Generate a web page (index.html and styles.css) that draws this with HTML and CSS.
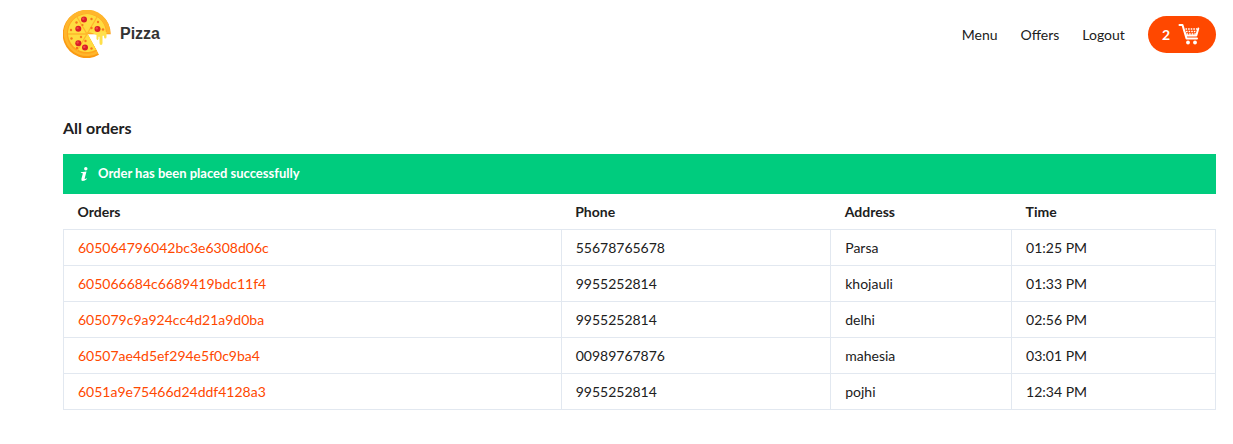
FILE: index.html
```html
<!DOCTYPE html>
<html lang="en">
<head>
<meta charset="utf-8">
<meta name="viewport" content="width=device-width, initial-scale=1">
<title>Pizza - All orders</title>
<link rel="stylesheet" href="styles.css">
</head>
<body>
<div class="container">
  <header class="header">
    <a class="brand" href="#">
      <svg class="brand-icon" viewBox="0 0 48 48" aria-hidden="true">
        <path fill="#fb9a12" d="M24 24.300H47.700A24 24 0 1 0 36 44.800Z"/>
        <path fill="#ffb62c" d="M24 23.400H47.200A23.200 23.200 0 1 0 35.200 43.200Z"/>
        <path fill="#ffa51c" d="M24 23H43.800A20 20 0 1 0 34 41Z"/>
        <path fill="#ffdc40" d="M24 22.500H43A19 19 0 1 0 33 39.800Z"/>
        <path fill="#ffe04a" d="M27 22H43.500V27Q43.500 28.500 42.300 28.500T41 27V26Q40 25 39.500 26V33Q39.500 35 38 35T36.500 33V27Q36 26 35.500 27V29Q34.500 31 33.500 29V25Z"/>
        <path fill="none" stroke="#ffb62c" stroke-width="1.300" d="M14 7L24 24L34 7M5 24H24L14 41"/>
        <g fill="#d91f26"><circle cx="21" cy="9.500" r="3"/><circle cx="15.300" cy="18.800" r="3"/><circle cx="34.500" cy="19" r="3"/><circle cx="15.300" cy="33.200" r="3"/><circle cx="22" cy="37.600" r="3"/></g>
        <g fill="#f34842"><circle cx="20.300" cy="8.800" r="1.200"/><circle cx="14.600" cy="18.100" r="1.200"/><circle cx="33.800" cy="18.300" r="1.200"/><circle cx="14.600" cy="32.500" r="1.200"/><circle cx="21.300" cy="36.900" r="1.200"/></g>
        <g fill="#f7761c"><circle cx="13.500" cy="12.500" r="1.200"/><circle cx="8" cy="20" r="1.200"/><circle cx="19.500" cy="15" r="1.100"/><circle cx="28.500" cy="9" r="1.200"/><circle cx="35" cy="12" r="1.200"/><circle cx="28.500" cy="18" r="1.200"/><circle cx="40" cy="19.500" r="1.200"/><circle cx="18" cy="27" r="1.200"/><circle cx="8.500" cy="28.500" r="1.200"/><circle cx="22.500" cy="31" r="1.200"/><circle cx="14" cy="38" r="1.200"/><circle cx="28.500" cy="38.500" r="1.200"/></g>
      </svg>
      <span>Pizza</span>
    </a>
    <nav class="nav">
      <a href="#">Menu</a>
      <a href="#">Offers</a>
      <button class="nav-button" type="button">Logout</button>
      <a class="cart" href="#" aria-label="Cart, 2 items">
        <span>2</span>
        <svg class="cart-icon" viewBox="0 0 22 22" aria-hidden="true">
          <path fill="none" stroke="#fff" stroke-width="2" stroke-linecap="round" stroke-linejoin="round" d="M1.500 2H4.500L8.500 15.500H19M5.700 6L7.800 12.500H18.300L20.300 5.500"/>
          <path fill="none" stroke="#fff" stroke-width="1.300" stroke-dasharray="1.600 1" d="M7.500 6H19M8 8.500H18.500M8.500 11H18"/>
          <circle cx="10" cy="19.500" r="1.900" fill="#fff"/><circle cx="17" cy="19.500" r="1.900" fill="#fff"/>
        </svg>
      </a>
    </nav>
  </header>
  <main class="orders">
    <h1 class="title">All orders</h1>
    <div class="alert" role="status">
      <svg class="alert-icon" viewBox="0 0 10 16" aria-hidden="true">
        <circle cx="6.800" cy="2.800" r="1.700" fill="#fff"/>
        <path fill="#fff" d="M2 6.200L7.500 5.500L5.700 12.300Q5.500 13.300 6.300 12.900L7.400 12.200L7.900 12.900Q5.800 15 3.800 15Q1.900 15 2.400 13L3.800 7.800Q4 7.100 3 7.100H1.800Z"/>
      </svg>
      <span>Order has been placed successfully</span>
    </div>
    <table class="table">
      <colgroup><col class="col-order"><col class="col-phone"><col class="col-address"><col class="col-time"></colgroup>
      <thead><tr><th scope="col">Orders</th><th scope="col">Phone</th><th scope="col">Address</th><th scope="col">Time</th></tr></thead>
      <tbody>
        <tr><td><a href="#">605064796042bc3e6308d06c</a></td><td>55678765678</td><td>Parsa</td><td>01:25 PM</td></tr>
        <tr><td><a href="#">605066684c6689419bdc11f4</a></td><td>9955252814</td><td>khojauli</td><td>01:33 PM</td></tr>
        <tr><td><a href="#">605079c9a924cc4d21a9d0ba</a></td><td>9955252814</td><td>delhi</td><td>02:56 PM</td></tr>
        <tr><td><a href="#">60507ae4d5ef294e5f0c9ba4</a></td><td>00989767876</td><td>mahesia</td><td>03:01 PM</td></tr>
        <tr><td><a href="#">6051a9e75466d24ddf4128a3</a></td><td>9955252814</td><td>pojhi</td><td>12:34 PM</td></tr>
      </tbody>
    </table>
  </main>
</div>
</body>
</html>
```
FILE: styles.css
```css
* { box-sizing: border-box; }
body {
  margin: 0;
  background: #fff;
  color: #202020;
  font: 14px/21px Lato, "Liberation Sans", sans-serif;
}
a { color: inherit; text-decoration: none; }
.container { padding: 0 17px 0 63px; }
.header {
  display: flex;
  align-items: center;
  justify-content: space-between;
  padding: 10px 0;
}
.brand {
  display: flex;
  align-items: center;
  gap: 9px;
  color: #333;
  font: bold 16px/24px "Liberation Sans", Arial, sans-serif;
}
.brand-icon { width: 48px; height: 48px; }
.nav { display: flex; align-items: center; gap: 23px; }
.nav-button {
  padding: 0;
  border: 0;
  background: none;
  color: inherit;
  font: inherit;
  cursor: pointer;
}
.cart {
  display: flex;
  align-items: center;
  gap: 8px;
  min-height: 37px;
  padding: 7px 16px 7px 14px;
  border-radius: 20px;
  background: #ff4800;
  color: #fff;
  font-weight: bold;
}
.cart-icon { width: 22px; height: 22px; }
.orders { padding-top: 49px; }
.title { margin: 0 0 15px; font-size: 16px; line-height: 22px; }
.alert {
  display: flex;
  align-items: center;
  gap: 9px;
  min-height: 40px;
  padding: 0 16px 1px;
  background: #00cc7e;
  color: #fff;
  font-size: 13px;
  font-weight: bold;
}
.alert-icon { width: 10px; height: 16px; }
.table { width: 100%; border-collapse: collapse; table-layout: fixed; }
.col-order { width: 43.2%; }
.col-phone { width: 23.4%; }
.col-address { width: 15.7%; }
.table th { padding: 7px 14px; text-align: left; }
.table td { padding: 7px 14px; border: 1px solid #e2e8f0; }
.table td a { color: #ff4800; }
```
